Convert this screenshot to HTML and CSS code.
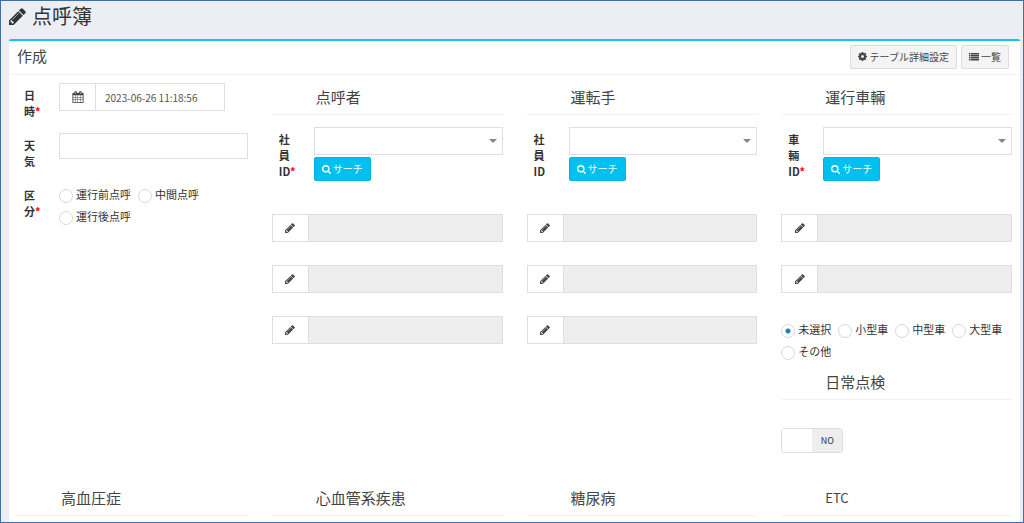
FILE: index.html
```html
<!DOCTYPE html>
<html lang="ja">
<head>
<meta charset="utf-8">
<meta name="viewport" content="width=device-width, initial-scale=1">
<title>点呼簿</title>
<link rel="stylesheet" href="styles.css">
</head>
<body>
<svg class="sprite" aria-hidden="true">
  <symbol id="pencil" viewBox="128 128 1536 1536"><path d="M491 1536l91-91-235-235-91 91v107h128v128h107zm523-928q0-22-22-22-10 0-17 7l-542 542q-7 7-7 17 0 22 22 22 10 0 17-7l542-542q7-7 7-17zm-54-192l416 416-832 832h-416v-416zm683 96q0 53-37 90l-166 166-416-416 166-165q36-38 90-38 53 0 91 38l235 234q37 39 37 91z"/></symbol>
  <symbol id="cog" viewBox="128 128 1536 1536"><path d="M1152 896q0-106-75-181t-181-75-181 75-75 181 75 181 181 75 181-75 75-181zm512-109v222q0 12-8 23t-20 13l-185 28q-19 54-39 91 35 50 107 138 10 12 10 25t-9 23q-27 37-99 108t-94 71q-12 0-26-9l-138-108q-44 23-91 38-16 136-29 186-7 28-36 28h-222q-14 0-24.500-8.500t-11.500-21.500l-28-184q-49-16-90-37l-141 107q-10 9-25 9-14 0-25-11-126-114-165-168-7-10-7-23 0-12 8-23 15-21 51-66.500t54-70.500q-27-50-41-99l-183-27q-13-2-21-12.500t-8-23.500v-222q0-12 8-23t19-13l186-28q14-46 39-92-40-57-107-138-10-12-10-24 0-10 9-23 26-36 98.500-107.500t94.500-71.500q13 0 26 10l138 107q44-23 91-38 16-136 29-186 7-28 36-28h222q14 0 24.500 8.500t11.500 21.500l28 184q49 16 90 37l142-107q9-9 24-9 13 0 25 10 129 119 165 170 7 8 7 22 0 12-8 23-15 21-51 66.500t-54 70.500q26 50 41 98l183 28q13 2 21 12.500t8 23.500z"/></symbol>
  <symbol id="search" viewBox="64 128 1664 1664"><path d="M1216 832q0-185-131.500-316.500t-316.500-131.500-316.500 131.500-131.500 316.500 131.500 316.500 316.500 131.500 316.500-131.500 131.500-316.500zm512 832q0 52-38 90t-90 38q-54 0-90-38l-343-342q-179 124-399 124-143 0-273.500-55.500t-225-150-150-225-55.500-273.500 55.500-273.500 150-225 225-150 273.500-55.500 273.500 55.500 225 150 150 225 55.500 273.500q0 220-124 399l343 343q37 37 37 90z"/></symbol>
  <symbol id="list" viewBox="0 0 20 16"><path d="M0 0h3v3H0zM4 0h16v3H4zM0 4h3v3H0zM4 4h16v3H4zM0 8h3v3H0zM4 8h16v3H4zM0 12h3v3H0zM4 12h16v3H4z"/></symbol>
  <symbol id="calendar" viewBox="0 0 26 28"><path fill-rule="evenodd" d="M2 4h3V2q0-2 2-2h1q2 0 2 2v2h6V2q0-2 2-2h1q2 0 2 2v2h3q2 0 2 2v20q0 2-2 2H2q-2 0-2-2V6q0-2 2-2zM7 2v5h1V2zM18 2v5h1V2zM2 10v4h4v-4zM7 10v4h5v-4zM13 10v4h5v-4zM19 10v4h5v-4zM2 15v5h4v-5zM7 15v5h5v-5zM13 15v5h5v-5zM19 15v5h5v-5zM2 21v5h4v-5zM7 21v5h5v-5zM13 21v5h5v-5zM19 21v5h5v-5z"/></symbol>
</svg>
<div class="page">
  <h1 class="page-title"><svg class="icon icon-lg"><use href="#pencil"/></svg>点呼簿</h1>
  <main class="box">
    <header class="box-header">
      <h2 class="box-title">作成</h2>
      <div class="tools">
        <button type="button" class="btn"><svg class="icon icon-sm"><use href="#cog"/></svg>テーブル詳細設定</button>
        <button type="button" class="btn btn-list"><svg class="icon icon-list"><use href="#list"/></svg>一覧</button>
      </div>
    </header>
    <form class="columns">
      <section class="column basics">
        <div class="field">
          <label class="field-label" for="datetime">日時<span class="required">*</span></label>
          <div class="group group-date"><span class="addon"><svg class="icon icon-cal"><use href="#calendar"/></svg></span><input class="input" id="datetime" type="text" value="2023-06-26 11:18:56"></div>
        </div>
        <div class="field">
          <label class="field-label" for="weather">天気</label>
          <input class="input" id="weather" type="text">
        </div>
        <div class="field" role="radiogroup" aria-labelledby="kind">
          <span class="field-label" id="kind">区分<span class="required">*</span></span>
          <div class="radios">
            <label class="radio"><input type="radio" name="kind">運行前点呼</label>
            <label class="radio"><input type="radio" name="kind">中間点呼</label>
            <label class="radio"><input type="radio" name="kind">運行後点呼</label>
          </div>
        </div>
      </section>

      <section class="column">
        <h3 class="heading">点呼者</h3>
        <div class="field lookup">
          <label class="field-label" for="caller">社員ID<span class="required">*</span></label>
          <div class="picker">
            <div class="select"><select id="caller"><option></option></select></div>
            <button type="button" class="btn btn-search"><svg class="icon icon-sm"><use href="#search"/></svg>サーチ</button>
          </div>
        </div>
        <div class="details">
          <div class="group"><span class="addon"><svg class="icon"><use href="#pencil"/></svg></span><input class="input" type="text" aria-label="点呼者 1" readonly></div>
          <div class="group"><span class="addon"><svg class="icon"><use href="#pencil"/></svg></span><input class="input" type="text" aria-label="点呼者 2" readonly></div>
          <div class="group"><span class="addon"><svg class="icon"><use href="#pencil"/></svg></span><input class="input" type="text" aria-label="点呼者 3" readonly></div>
        </div>
      </section>

      <section class="column">
        <h3 class="heading">運転手</h3>
        <div class="field lookup">
          <label class="field-label" for="driver">社員ID</label>
          <div class="picker">
            <div class="select"><select id="driver"><option></option></select></div>
            <button type="button" class="btn btn-search"><svg class="icon icon-sm"><use href="#search"/></svg>サーチ</button>
          </div>
        </div>
        <div class="details">
          <div class="group"><span class="addon"><svg class="icon"><use href="#pencil"/></svg></span><input class="input" type="text" aria-label="運転手 1" readonly></div>
          <div class="group"><span class="addon"><svg class="icon"><use href="#pencil"/></svg></span><input class="input" type="text" aria-label="運転手 2" readonly></div>
          <div class="group"><span class="addon"><svg class="icon"><use href="#pencil"/></svg></span><input class="input" type="text" aria-label="運転手 3" readonly></div>
        </div>
      </section>

      <section class="column">
        <h3 class="heading">運行車輛</h3>
        <div class="field lookup">
          <label class="field-label" for="vehicle">車輛ID<span class="required">*</span></label>
          <div class="picker">
            <div class="select"><select id="vehicle"><option></option></select></div>
            <button type="button" class="btn btn-search"><svg class="icon icon-sm"><use href="#search"/></svg>サーチ</button>
          </div>
        </div>
        <div class="details">
          <div class="group"><span class="addon"><svg class="icon"><use href="#pencil"/></svg></span><input class="input" type="text" aria-label="運行車輛 1" readonly></div>
          <div class="group"><span class="addon"><svg class="icon"><use href="#pencil"/></svg></span><input class="input" type="text" aria-label="運行車輛 2" readonly></div>
          <div class="radios">
            <label class="radio"><input type="radio" name="size" checked>未選択</label>
            <label class="radio"><input type="radio" name="size">小型車</label>
            <label class="radio"><input type="radio" name="size">中型車</label>
            <label class="radio"><input type="radio" name="size">大型車</label>
            <label class="radio"><input type="radio" name="size">その他</label>
          </div>
        </div>
        <h3 class="heading">日常点検</h3>
        <label class="switch"><input type="checkbox" aria-label="日常点検"><span class="switch-text">NO</span></label>
      </section>

      <h3 class="heading">高血圧症</h3>
      <h3 class="heading">心血管系疾患</h3>
      <h3 class="heading">糖尿病</h3>
      <h3 class="heading heading-latin">ETC</h3>
    </form>
  </main>
</div>
</body>
</html>
```
FILE: styles.css
```css
* { box-sizing: border-box; }

body {
  margin: 0;
  background: #eceef4;
  color: #333;
  font: 11px/16px "Noto Sans CJK JP", sans-serif;
}

input, select, button { font: inherit; color: inherit; margin: 0; }

h1, h2, h3 { margin: 0; font-weight: 400; }

.sprite { position: absolute; width: 0; height: 0; }

.icon { width: 10px; height: 10px; flex: none; fill: currentColor; }
.icon-lg { width: 17px; height: 17px; }
.icon-sm { width: 9px; height: 9px; }
.icon-list { width: 10px; height: 8px; }
.icon-cal { width: 12px; height: 12px; }

.page {
  display: flex;
  flex-direction: column;
  min-height: 100vh;
  padding: 0 3px 0 8px;
  border: 1px solid #3f6fa3;
}

.page-title {
  display: flex;
  align-items: center;
  gap: 6px;
  padding: 0 0 8px;
  font-size: 20px;
  line-height: 30px;
}

.box {
  flex: 1;
  background: #fff;
  border-top: 2px solid #14c4f0;
  border-radius: 2px 2px 0 0;
}

.box-header {
  display: flex;
  align-items: center;
  justify-content: space-between;
  height: 34px;
  padding: 0 11px 2px 8px;
  border-bottom: 1px solid #f4f4f4;
}

.box-title { color: #444; font-size: 15px; line-height: 22px; padding-bottom: 2px; }

.tools { display: flex; gap: 4px; }

.btn {
  display: inline-flex;
  align-items: center;
  gap: 3px;
  height: 24px;
  padding: 0 7px;
  border: 1px solid #ddd;
  border-radius: 2px;
  background: #f4f4f4;
  color: #444;
  font-size: 10px;
  line-height: 16px;
}

.btn-list { gap: 2px; }

.btn-search {
  gap: 2px;
  background: #00c0ef;
  border-color: #00b4e2;
  color: #fff;
}

.columns {
  display: grid;
  grid-template-columns: repeat(4, 1fr);
  column-gap: 24px;
  row-gap: 25px;
  padding: 2px 8px 6px;
}

.column { min-width: 0; }

.basics {
  display: flex;
  flex-direction: column;
  gap: 14px;
  padding-top: 6px;
}

.heading {
  padding: 4px 0 2px 44px;
  border-bottom: 1px solid #f1f1f1;
  color: #444;
  font-size: 15px;
  line-height: 31px;
}

.heading-latin { font-size: 13px; }

.field {
  display: grid;
  grid-template-columns: 42px 1fr;
  align-items: start;
}

.field-label {
  padding: 4px 15px 0 7px;
  font-weight: 700;
  word-break: break-all;
}

.required { color: #f00; }

.lookup { margin-top: 12px; }

.lookup .field-label { word-break: normal; }

.picker {
  display: flex;
  flex-direction: column;
  align-items: flex-start;
  gap: 2px;
}

.input {
  width: 100%;
  min-width: 0;
  height: 26px;
  padding: 0 9px;
  border: 1px solid #dcdfe6;
  border-radius: 0;
  background: #fff;
  color: #555;
  font-size: 10px;
}

.input:read-only { background: #eee; }

.group { display: flex; height: 28px; }
.group .input { flex: 1; height: 28px; }
.group-date { width: 166px; }

.addon {
  display: flex;
  align-items: center;
  justify-content: center;
  width: 36px;
  border: 1px solid #dcdfe6;
  border-right: 0;
  color: #444;
}

.select { position: relative; width: 100%; }

.select select {
  display: block;
  appearance: none;
  width: 100%;
  height: 28px;
  padding: 0 24px 0 9px;
  border: 1px solid #dcdfe6;
  border-radius: 0;
  background: #fff;
}

.select::after {
  content: "";
  position: absolute;
  top: 12px;
  right: 6px;
  border: 4px solid transparent;
  border-top-color: #888;
  border-bottom: 0;
  pointer-events: none;
}

.details {
  display: flex;
  flex-direction: column;
  gap: 23px;
  margin-top: 33px;
}

.details .radios { padding-top: 2px; }

.radios { display: flex; flex-wrap: wrap; column-gap: 7px; }

.radio {
  display: flex;
  align-items: center;
  gap: 3px;
  line-height: 22px;
}

.radio input {
  appearance: none;
  width: 14px;
  height: 14px;
  margin-top: 3px;
  border: 1px solid #d8d8d8;
  border-radius: 50%;
  background: #fff;
}

.radio input:checked {
  background: radial-gradient(circle, #1f7fb8 2px, #fff 3px);
}

.switch {
  display: flex;
  width: 62px;
  height: 25px;
  margin-top: 28px;
  border: 1px solid #ddd;
  border-radius: 3px;
  overflow: hidden;
}

.switch input { appearance: none; flex: 1; background: #fff; }

.switch-text {
  flex: 1;
  background: #eee;
  font-size: 9px;
  line-height: 23px;
  text-align: center;
}
```
